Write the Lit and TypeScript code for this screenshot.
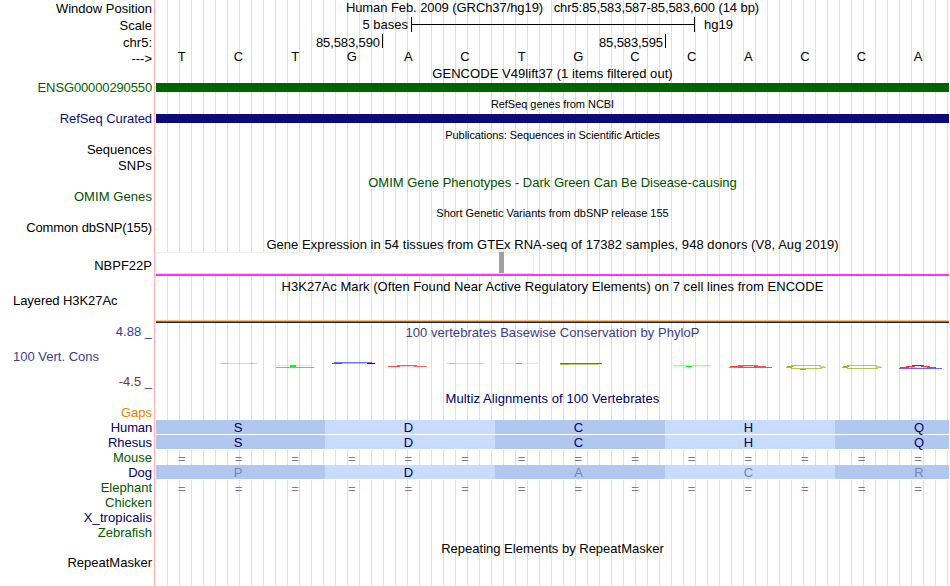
import { LitElement, html, svg, css } from "lit";
import { customElement } from "lit/decorators.js";

type Row = { h: number; text?: string; cls?: string; ls?: number };

const labels: Row[] = [
  { h: 1 },
  { h: 17, text: "Window Position" },
  { h: 17, text: "Scale" },
  { h: 16, text: "chr5:" },
  { h: 29, text: "--->" },
  { h: 31, text: "ENSG00000290550", cls: "gene", ls: -0.13 },
  { h: 31, text: "RefSeq Curated", cls: "refseq", ls: -0.07 },
  { h: 16, text: "Sequences" },
  { h: 31, text: "SNPs", ls: 0.2 },
  { h: 31, text: "OMIM Genes", cls: "omim", ls: 0.08 },
  { h: 38, text: "Common dbSNP(155)", ls: -0.12 },
  { h: 35, text: "NBPF22P" },
  { h: 31, text: "Layered H3K27Ac", cls: "start", ls: -0.07 },
  { h: 25, text: "4.88 _", cls: "cons" },
  { h: 25, text: "100 Vert. Cons", cls: "start cons" },
  { h: 31, text: "-4.5 _", cls: "neg" },
  { h: 15, text: "Gaps", cls: "gaps" },
  { h: 15, text: "Human", cls: "navy", ls: -0.15 },
  { h: 15, text: "Rhesus", cls: "navy" },
  { h: 15, text: "Mouse", cls: "species" },
  { h: 15, text: "Dog", cls: "navy" },
  { h: 15, text: "Elephant", cls: "species" },
  { h: 15, text: "Chicken", cls: "species" },
  { h: 15, text: "X_tropicalis", cls: "navy", ls: 0.08 },
  { h: 30, text: "Zebrafish", cls: "species" },
  { h: 15, text: "RepeatMasker" },
];

const bases = [..."TCTGACTGCCACCA"];

@customElement("app-root")
export class AppRoot extends LitElement {
  static styles = css`
    :host { display: block; }
    .browser {
      display: grid; grid-template-columns: 154px 1px 1px 793px;
      width: 950px; height: 586px; overflow: hidden; background: #fff; color: #000;
      font: 13px/15px "Liberation Sans", Arial, sans-serif;
    }
    .labels { padding-right: 2px; text-align: right; }
    .divider { background: #ffb0b0; }
    .data {
      grid-column: 4; overflow: hidden;
      background: repeating-linear-gradient(90deg, transparent 0 11px, #dcdcf5 11px 12px);
    }
    .gene { color: #006400; }
    .refseq { color: #0c0c78; }
    .omim { color: #005000; }
    .cons { color: #3c3c8c; }
    .neg { color: #783232; }
    .gaps { color: #e68200; }
    .navy { color: #000064; }
    .species { color: #005a00; }
    .start { text-align: left; padding-left: 13px; }
    .title { text-align: center; white-space: pre; }
    .small { font-size: 11px; }
    .scale { display: flex; height: 17px; }
    .scale-name { width: 252px; text-align: right; padding-right: 3px; }
    .scale-bar { width: 284px; height: 15px; box-sizing: border-box;
      border: solid #000; border-width: 0 1px;
      background: linear-gradient(#000, #000) 0 7px / 100% 1px no-repeat; }
    .assembly { padding-left: 9px; }
    .ticks { display: flex; height: 14px; }
    .tick { width: 227px; box-sizing: border-box; height: 14px; line-height: 18px; padding-right: 2px; letter-spacing: -0.1px; text-align: right; border-right: 1px solid #000; }
    .tick + .tick { width: 283px; }
    .bases { display: grid; grid-template-columns: repeat(14, 1fr); margin-left: -2.5px; width: 793px; text-align: center; }
    .bar { height: 9px; }
    .green-bar { background: #006400; }
    .navy-bar { background: #0c0c78; }
    .expression { height: 22px; border-bottom: 2px solid #ff33ff; }
    .expression-box { height: 22px; width: 378px; box-sizing: border-box; border: 1px solid #f0f0f0; border-bottom-color: #dcdcdc; background: #fff; display: flow-root; }
    .tissue { margin-left: 342px; margin-top: -1px; width: 5px; height: 21px; background: #a0a0a0; }
    .signal { height: 1px; border-top: 1px solid #ffc060; border-bottom: 1px solid #202050; background: #9a7040; }
    .logo { display: block; }
    .align { display: grid; grid-template-columns: 169px 170px 170px 170px 114px; height: 14px; border-bottom: 1px solid #fff; line-height: 15px; }
    .codon { height: 14px; background: #b0c8f0; color: #000064; text-align: center; }
    .codon:nth-child(even) { background: #c8dcff; }
    .codon:first-child { padding-right: 5px; }
    .codon:nth-child(n + 2) { padding-right: 3px; }
    .codon:last-child { padding-right: 0; padding-left: 54px; }
    .align .diff { color: #8080b4; }
    .gapped { height: 15px; line-height: 17px; color: #7878aa; }
  `;

  private title(r: Row) {
    return html`<div class="title ${r.cls ?? ""}" style="height:${r.h}px;letter-spacing:${r.ls ?? 0}px">${r.text}</div>`;
  }

  private space(h: number) {
    return html`<div style="height:${h}px"></div>`;
  }

  private codons(letters: string, same: string) {
    return html`<div class="align">${[...letters].map(
      (c, i) => html`<span class="codon ${same[i] === "0" ? "diff" : ""}">${c}</span>`
    )}</div>`;
  }

  private gapRow() {
    return html`<div class="bases gapped">${bases.map(() => html`<span>=</span>`)}</div>`;
  }

  private logo() {
    const line = (x: number, y: number, w: number, c: string, o = 1, h = 1) =>
      svg`<rect x=${x} y=${y} width=${w} height=${h} fill=${c} fill-opacity=${o}></rect>`;
    const olive = "#a0a000";
    const ring = (x: number) => svg`
      ${line(x + 5, 365, 30, olive, 0.65)}${line(x + 1, 366, 6, olive, 0.9)}${line(x + 33, 366, 6, olive, 0.4)}
      ${line(x, 367, 6, olive, 0.8)}${line(x + 34, 367, 6, olive, 0.6)}${line(x + 5, 368, 31, olive, 0.65)}`;
    return html`<svg class="logo" width="793" height="48" viewBox="156 343 793 48" shape-rendering="crispEdges">
      ${line(220, 363, 38, olive, 0.35)}${line(222, 363, 6, olive, 0.4)}${line(250, 363, 5, olive, 0.3)}
      ${line(275, 365, 37, "#00ff00", 0.25)}${line(276, 367, 38, "#ff0000", 0.5)}${line(290, 365, 6, "#00ff00", 1, 2)}
      ${line(334, 362, 38, "#0000ff", 0.55)}${line(332, 363, 10, "#0000ff", 0.7)}${line(342, 363, 26, "#0000ff", 0.25)}${line(367, 363, 8, "#0000ff")}
      ${line(397, 365, 20, "#ff0000", 0.65)}${line(388, 366, 12, "#ff0000", 0.7)}${line(400, 366, 14, "#ff0000", 0.2)}${line(414, 366, 13, "#ff0000", 0.6)}
      ${line(447, 363, 38, olive, 0.35)}${line(449, 363, 6, olive, 0.4)}
      ${line(500, 363, 38, "#00c000", 0.18)}${line(516, 363, 6, "#00ff00")}
      ${line(560, 363, 42, "#0000ff", 0.65)}${line(560, 364, 39, olive, 0.55)}${line(561, 364, 8, olive, 0.6)}
      ${line(673, 365, 38, "#80a000", 0.35)}${line(672, 366, 39, "#00ff00", 0.15)}${line(686, 366, 6, "#00ff00")}
      ${line(738, 365, 20, "#ff0000", 0.65)}${line(730, 366, 13, "#ff0000", 0.75)}${line(743, 366, 12, "#ff0000", 0.25)}${line(754, 366, 12, "#ff0000", 0.7)}
      ${line(729, 367, 9, "#e04060", 0.7)}${line(738, 367, 34, "#0000ff", 0.55)}
      ${ring(786)}${line(787, 369, 32, "#00ff00", 0.12)}${line(800, 369, 6, "#00ff00")}
      ${ring(842)}
      ${line(912, 365, 12, "#ff0000")}${line(906, 366, 9, "#ff0000", 0.8)}${line(921, 366, 9, "#ff0000", 0.8)}
      ${line(900, 367, 9, "#ff0000", 0.8)}${line(927, 367, 9, "#ff0000", 0.8)}${line(909, 367, 18, "#ff0000", 0.15)}
      ${line(899, 368, 6, "#b02080", 0.8)}${line(905, 368, 37, "#0000ff", 0.6)}
    </svg>`;
  }

  render() {
    return html`<main class="browser">
      <section class="labels">${labels.map(
        (r) => html`<div class=${r.cls ?? ""} style="height:${r.h}px;letter-spacing:${r.ls ?? 0}px">${r.text}</div>`
      )}</section>
      <div class="divider"></div>
      <section class="data">
        ${this.title({ h: 17, ls: -0.08, text: "Human Feb. 2009 (GRCh37/hg19)   chr5:85,583,587-85,583,600 (14 bp)" })}
        <div class="scale"><span class="scale-name">5 bases</span><span class="scale-bar"></span><span class="assembly">hg19</span></div>
        <div class="ticks"><span class="tick">85,583,590</span><span class="tick">85,583,595</span></div>
        ${this.space(1)}
        <div class="bases">${bases.map((b) => html`<span>${b}</span>`)}</div>
        ${this.space(2)}
        ${this.title({ h: 17, ls: 0.05, text: "GENCODE V49lift37 (1 items filtered out)" })}
        <div class="bar green-bar"></div>
        ${this.space(5)}
        ${this.title({ h: 17, ls: -0.04, text: "RefSeq genes from NCBI", cls: "small" })}
        <div class="bar navy-bar"></div>
        ${this.space(5)}
        ${this.title({ h: 47, ls: -0.07, text: "Publications: Sequences in Scientific Articles", cls: "small" })}
        ${this.title({ h: 31, text: "OMIM Gene Phenotypes - Dark Green Can Be Disease-causing", cls: "omim" })}
        ${this.title({ h: 31, ls: -0.02, text: "Short Genetic Variants from dbSNP release 155", cls: "small" })}
        ${this.title({ h: 15, ls: 0.055, text: "Gene Expression in 54 tissues from GTEx RNA-seq of 17382 samples, 948 donors (V8, Aug 2019)" })}
        <div class="expression"><div class="expression-box"><div class="tissue"></div></div></div>
        ${this.space(3)}
        ${this.title({ h: 41, ls: 0.05, text: "H3K27Ac Mark (Often Found Near Active Regulatory Elements) on 7 cell lines from ENCODE" })}
        <div class="signal"></div>
        ${this.space(2)}
        ${this.title({ h: 18, ls: 0.04, text: "100 vertebrates Basewise Conservation by PhyloP", cls: "cons" })}
        ${this.logo()}
        ${this.title({ h: 29, ls: 0.08, text: "Multiz Alignments of 100 Vertebrates", cls: "navy" })}
        ${this.codons("SDCHQ", "11111")}
        ${this.codons("SDCHQ", "11111")}
        ${this.gapRow()}
        ${this.codons("PDACR", "01000")}
        ${this.gapRow()}
        ${this.space(46)}
        ${this.title({ h: 15, text: "Repeating Elements by RepeatMasker" })}
      </section>
    </main>`;
  }
}
